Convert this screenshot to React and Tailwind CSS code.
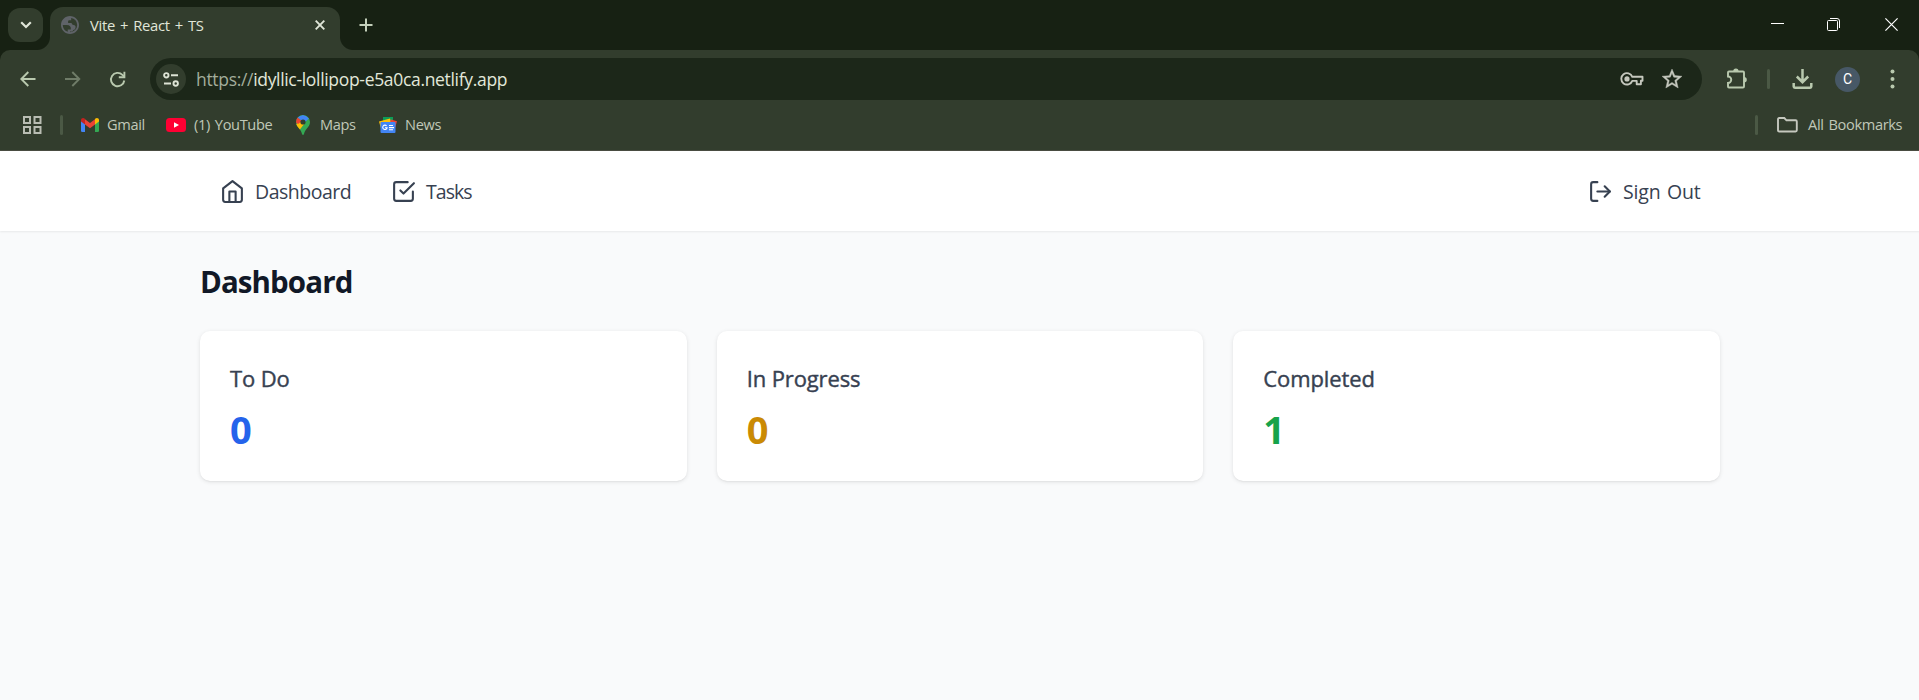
import React from "react";

const stroke = { fill: "none", stroke: "currentColor", strokeLinecap: "round", strokeLinejoin: "round" };

const HomeIcon = () => (
  <svg className="size-[25px]" viewBox="0 0 24 24" strokeWidth="2" {...stroke}>
    <path d="m3 9 9-7 9 7v11a2 2 0 0 1-2 2H5a2 2 0 0 1-2-2z" />
    <polyline points="9 22 9 12 15 12 15 22" />
  </svg>
);
const CheckIcon = () => (
  <svg className="size-[25px]" viewBox="0 0 24 24" strokeWidth="2" {...stroke}>
    <path d="m9 11 3 3L22 4" />
    <path d="M21 12v7a2 2 0 0 1-2 2H5a2 2 0 0 1-2-2V5a2 2 0 0 1 2-2h11" />
  </svg>
);
const LogOutIcon = () => (
  <svg className="size-[25px]" viewBox="0 0 24 24" strokeWidth="2" {...stroke}>
    <path d="M9 21H5a2 2 0 0 1-2-2V5a2 2 0 0 1 2-2h4" />
    <polyline points="16 17 21 12 16 7" />
    <line x1="21" x2="9" y1="12" y2="12" />
  </svg>
);

function TabStrip() {
  return (
    <div className="flex h-[50px] items-start bg-[#172113] pl-2">
      <div className="mt-2 flex h-[34px] w-[35px] items-center justify-center rounded-[12px] bg-[#323d2d] text-[#e0e6d8]">
        <svg width="12" height="8" viewBox="0 0 12 8" fill="none" stroke="currentColor" strokeWidth="2.2">
          <path d="M1.2 1.2 6 6l4.800-4.800" />
        </svg>
      </div>
      <div className="relative ml-[7px] mt-[7px] flex h-[43px] w-[290px] items-center rounded-t-[13px] bg-[#323d2d] pb-[7px] pl-[11px] pr-[15px]">
        <div className="absolute -left-[13px] bottom-0 size-[13px] bg-[radial-gradient(circle_at_0_0,transparent_12.5px,#323d2d_13.5px)]" />
        <div className="absolute -right-[13px] bottom-0 size-[13px] bg-[radial-gradient(circle_at_100%_0,transparent_12.5px,#323d2d_13.5px)]" />
        <svg width="18" height="18" viewBox="2 2 20 20" fill="#5f6368">
          <path d="M12 2C6.480 2 2 6.480 2 12s4.480 10 10 10 10-4.480 10-10S17.520 2 12 2zM4 12h4.400c3.407.020 4.922 1.730 4.543 5.127H9.488v2.470A8.004 8.004 0 0 1 4 12zm8 8v-.9h1.900c.9 0 1.600-.7 1.600-1.600 1.600.1 2.500-.9 2.700-2.900.1-1.500-.6-2.300-2.200-2.500-1.500-.1-2.100-1-2.200-2.200H9.900V8.200c0-1 .6-1.500 1.600-1.500h1.800V4.100A8 8 0 0 1 20 12a8 8 0 0 1-8 8z" />
        </svg>
        <span className="ml-[11px] whitespace-nowrap pt-px text-[14.800px] tracking-[-0.300px] [word-spacing:1.5px] text-[#e0e6d8]">Vite + React + TS</span>
        <svg className="ml-auto text-[#e0e6d8]" width="10" height="10" viewBox="0 0 10 10" fill="none" stroke="currentColor" strokeWidth="1.900">
          <path d="M.7.7l8.600 8.600M9.300.7L.7 9.300" />
        </svg>
      </div>
      <svg className="ml-[19px] mt-[18px] text-[#c3cfba]" width="14" height="14" viewBox="0 0 14 14" stroke="currentColor" strokeWidth="2">
        <path d="M7 .5v13M.5 7h13" />
      </svg>
      <div className="ml-auto mr-[21px] mt-[18px] flex items-center gap-[43px] text-white">
        <svg width="13" height="13" viewBox="0 0 13 13" stroke="currentColor"><path d="M0 5.500h13" /></svg>
        <svg width="13" height="13" viewBox="0 0 13 13" fill="none" stroke="currentColor">
          <rect x=".5" y="2.500" width="10" height="10" rx="1" />
          <path d="M3 .5h7a2.500 2.500 0 0 1 2.500 2.500v7" />
        </svg>
        <svg className="ml-[2px]" width="13" height="13" viewBox="0 0 13 13" stroke="currentColor" strokeWidth="1.200"><path d="M.4.4l12.200 12.200M12.600.4L.4 12.600" /></svg>
      </div>
    </div>
  );
}

function Toolbar() {
  return (
    <div className="flex h-[58px] items-center rounded-t-[10px] bg-[#323d2d] pl-5 pr-[24px] text-[#b9c9ae]">
      <svg width="16" height="16" viewBox="0 0 16 16" fill="none" stroke="currentColor" strokeWidth="1.900">
        <path d="M15.500 8H1.500M8.300 1 1.300 8l7 7" />
      </svg>
      <svg className="ml-[29px] text-[#6f7c68]" width="16" height="16" viewBox="0 0 16 16" fill="none" stroke="currentColor" strokeWidth="1.900">
        <path d="M0 8h14M7.300 1l7 7-7 7" />
      </svg>
      <svg className="ml-[28px]" width="17" height="17" viewBox="0 0 17 17" fill="none" stroke="currentColor" strokeWidth="1.900">
        <path d="M15.300 9.500A6.700 6.700 0 1 1 13.400 3.800L15.300 5.700" />
        <path d="M15.400.8V6.300H9.800" />
      </svg>
      <div className="ml-[24px] flex h-[42px] w-[1552px] items-center rounded-full bg-[#1c2719] pl-[6px] pr-[20px]">
        <div className="flex size-[30px] items-center justify-center rounded-full bg-[#323d2d] text-[#dde3d5]">
          <svg width="16" height="15" viewBox="0 0 16 15" fill="none" stroke="currentColor" strokeWidth="1.900">
            <circle cx="3.300" cy="3.300" r="2.200" />
            <path d="M8 3.300h7M1 11.500h7" />
            <circle cx="12.700" cy="11.500" r="2.200" />
          </svg>
        </div>
        <span className="ml-[10px] whitespace-nowrap pt-px text-[17.500px] leading-none tracking-[-0.320px] text-[#e2e8da]">
          <span className="text-[#a3ad9b]">https://</span>idyllic-lollipop-e5a0ca.netlify.app
        </span>
        <svg className="ml-auto text-[#c5c8be]" width="24" height="14" viewBox="0 0 24 14" fill="none" stroke="currentColor" strokeWidth="1.900" strokeLinejoin="round">
          <path d="M12.300 4.800H22.500V8.700H20.900V12.200H16.700V8.900H12.300A5.700 5.700 0 1 1 12.300 4.800Z" />
          <circle cx="7" cy="6.900" r="2.600" fill="currentColor" stroke="none" />
        </svg>
        <svg className="ml-[18px] text-[#c5c8be]" width="20" height="20" viewBox="2 2 20 20" fill="currentColor" stroke="currentColor" strokeWidth="0.400">
          <path d="M22 9.240l-7.190-.62L12 2 9.190 8.630 2 9.240l5.460 4.730L5.820 21 12 17.270 18.180 21l-1.630-7.030L22 9.240zM12 15.400l-3.760 2.270 1-4.280-3.320-2.880 4.380-.38L12 6.100l1.710 4.040 4.380.38-3.320 2.880 1 4.280L12 15.400z" />
        </svg>
      </div>
      <svg className="ml-[24px]" width="22" height="22" viewBox="0 0 22 22">
        <path d="M2 4.500Q2 3.500 3 3.500H17Q18 3.500 18 4.500V18.500Q18 19.500 17 19.500H3Q2 19.500 2 18.500V15A3.200 3.200 0 0 0 2 8.500Z" fill="none" stroke="currentColor" strokeWidth="1.900" />
        <path d="M7.200 3.500a2.700 2.900 0 0 1 5.400 0zM18 9a2.800 2.700 0 0 1 0 5.400z" fill="currentColor" />
      </svg>
      <div className="ml-[19px] h-5 w-[3px] rounded-full bg-[#4b5945]" />
      <svg className="ml-[22px]" width="22" height="22" viewBox="0 0 22 22" fill="none" stroke="currentColor" strokeWidth="2.500">
        <path d="M10.500 1v13M4.800 8.500l5.700 5.700 5.700-5.700M1.700 15v3.600q0 1.200 1.200 1.200h15.200q1.200 0 1.200-1.200V15" />
      </svg>
      <div className="ml-[21px] flex size-[25px] items-center justify-center rounded-full bg-[#475866] font-['Roboto',sans-serif] text-[14px] text-white">C</div>
      <svg className="ml-auto" width="5" height="20" viewBox="0 0 5 20" fill="currentColor">
        <circle cx="2.500" cy="2.500" r="2" /><circle cx="2.500" cy="10" r="2" /><circle cx="2.500" cy="17.500" r="2" />
      </svg>
    </div>
  );
}

function Bookmarks() {
  return (
    <div className="flex h-[43px] items-center border-b border-[#4a4d42] bg-[#323d2d] pb-[9px] pl-[23px] pr-[16px] text-[14.600px] tracking-[-0.350px] [word-spacing:1.5px] text-[#c0c8b8]">
      <svg width="19" height="18" viewBox="0 0 19 18" fill="none" stroke="#b9bdb3" strokeWidth="2">
        <path d="M1 1h6v6H1zM11.500 1h6v6h-6zM1 11h6v6H1zM11.500 11h6v6h-6z" />
      </svg>
      <div className="ml-[18px] h-5 w-[3px] rounded-full bg-[#4b5945]" />
      <svg className="ml-[18px]" width="18" height="14" viewBox="0 0 18 14">
        <path d="M0 2v10.700Q0 14 1.300 14H4V5z" fill="#4285f4" />
        <path d="M14 5v9h2.700q1.300 0 1.300-1.300V2z" fill="#34a853" />
        <path d="M14 1.200V6.500L18 3.500V2.100C18 .2 15.800-.6 14.400.6z" fill="#fbbc04" />
        <path d="M4 6.500V1.200l5 3.800 5-3.800v5.300L9 10.300z" fill="#ea4335" />
        <path d="M0 2.100v1.400l4 3V1.200L3.600.6C2.200-.6 0 .2 0 2.100z" fill="#c5221f" />
      </svg>
      <span className="ml-[8px] w-[50px]">Gmail</span>
      <svg className="ml-[9px]" width="20" height="14" viewBox="0 0 20 14">
        <rect width="20" height="14" rx="3.500" fill="#ff0033" /><path d="M8 4.200v5.600L13 7z" fill="#fff" />
      </svg>
      <span className="ml-[8px] w-[90px] whitespace-nowrap">(1) YouTube</span>
      <svg className="ml-[12px]" width="14" height="20" viewBox="0 0 14 20">
        <defs><clipPath id="pin"><path d="M7 0a7 7 0 0 1 7 7c0 3-1.600 4.600-3.300 6.800C9.300 15.600 8.500 17 8 18.900Q7.500 20 7 20T6 18.900C5.500 17 4.700 15.600 3.300 13.800 1.600 11.600 0 10 0 7a7 7 0 0 1 7-7z" /></clipPath></defs>
        <g clipPath="url(#pin)">
          <path d="M0 0h14v20H0z" fill="#34a853" />
          <path d="M1 14-1 10 6 4l3 4-5.500 7z" fill="#fbbc04" />
          <path d="M-1 7V0L1.700 2.500 6 6 2 9z" fill="#ea4335" />
          <path d="M1.700 2.500Q4 0 7 0t6 3.500L9 7 6 6z" fill="#4285f4" />
        </g>
        <circle cx="7" cy="7" r="2.600" fill="#323d2d" />
      </svg>
      <span className="ml-[10px] w-[50px]">Maps</span>
      <svg className="ml-[9px]" width="18" height="16" viewBox="0 0 18 16">
        <path d="M4 0h10v8H4z" fill="#0c9d58" />
        <path d="m0 4.500 11-3 2 7-11 3z" fill="#ffc107" />
        <path d="m12 2.500 6 1.800-2 7-6-2z" fill="#ea4335" />
        <rect x="1.500" y="5" width="15" height="11" rx="1" fill="#4285f4" />
        <path d="M7.600 8.900A2.200 2.200 0 1 0 8.100 10.700H6M10 8.500h4M10 10.600h5M10 12.700h4" fill="none" stroke="#fff" strokeWidth="1.100" />
      </svg>
      <span className="ml-[8px]">News</span>
      <div className="ml-auto h-5 w-[3px] rounded-full bg-[#4b5945]" />
      <svg className="ml-[19px] text-[#c5c8be]" width="21" height="16" viewBox="0 0 21 16" fill="none" stroke="currentColor" strokeWidth="1.900">
        <path d="M1 2.200Q1 1 2.200 1H7.300L9.500 3.300H18.600Q19.800 3.300 19.800 4.500V13.300Q19.800 14.500 18.600 14.500H2.200Q1 14.500 1 13.300Z" />
      </svg>
      <span className="ml-[10px] w-[95px] whitespace-nowrap">All Bookmarks</span>
    </div>
  );
}

const cards = [
  { title: "To Do", value: 0, color: "text-[#2563eb]" },
  { title: "In Progress", value: 0, color: "text-[#ca8a04]" },
  { title: "Completed", value: 1, color: "text-[#16a34a]" },
];

export default function App() {
  return (
    <div className="flex h-[700px] w-full flex-col overflow-hidden bg-[#f9fafb] font-['Open_Sans','Noto_Sans',sans-serif]">
      <div className="bg-[#172113]">
        <TabStrip />
        <Toolbar />
        <Bookmarks />
      </div>
      <nav className="h-20 w-[1920px] shrink-0 bg-white shadow-[0_1px_2px_0_rgb(0_0_0/0.07)]">
        <div className="mx-auto flex h-full w-[1520px] items-center px-5 text-[19.500px] tracking-[-0.480px] text-[#374151]">
          <a className="flex items-center gap-[10px]"><HomeIcon /><span className="w-[96px] pt-[2px]">Dashboard</span></a>
          <a className="ml-10 flex items-center gap-[10px]"><CheckIcon /><span className="pt-[2px] tracking-[-0.950px]">Tasks</span></a>
          <a className="ml-auto flex items-center gap-[10px]"><LogOutIcon /><span className="w-[77px] whitespace-nowrap pt-[2px] tracking-[-0.150px] [word-spacing:1.5px]">Sign Out</span></a>
        </div>
      </nav>
      <div className="w-[1920px]">
        <main className="mx-auto w-[1520px] py-[30px]">
          <h1 className="h-10 pt-px text-[29.500px] font-bold leading-10 tracking-[-0.900px] text-[#111827]">Dashboard</h1>
          <div className="mt-[30px] grid grid-cols-3 gap-[30px]">
            {cards.map((c) => (
              <section key={c.title} className="h-[150px] rounded-[10px] bg-white p-[30px] shadow-[0_1px_4px_0_rgb(0_0_0/0.1),0_1px_2px_-1px_rgb(0_0_0/0.1)]">
                <h2 className="text-[22px] font-medium leading-[35px] tracking-[-0.120px] text-[#374151] [-webkit-text-stroke:0.4px]">{c.title}</h2>
                <p className={`mt-[11px] text-[38px] font-bold leading-[45px] ${c.color}`}>{c.value}</p>
              </section>
            ))}
          </div>
        </main>
      </div>
    </div>
  );
}
